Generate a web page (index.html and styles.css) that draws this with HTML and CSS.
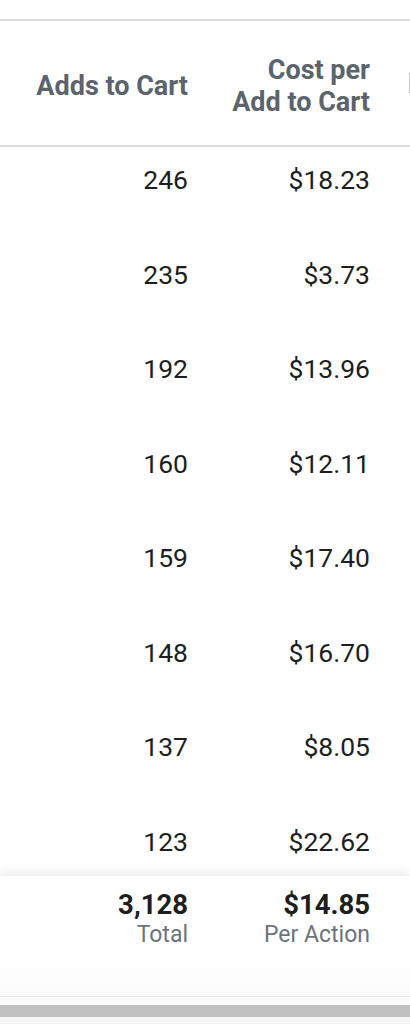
FILE: index.html
```html
<!DOCTYPE html>
<html lang="en">
<head>
<meta charset="utf-8">
<title>Adds to Cart</title>
<link rel="stylesheet" href="styles.css">
</head>
<body>
<div class="page">
  <div class="table">
    <div class="head">
      <div class="hcell">Adds to Cart</div>
      <div class="hcell">Cost per<br>Add to Cart</div>
      <div class="hcell next"><span class="stem"></span></div>
    </div>
    <div class="rows">
      <div class="row"><div class="cell">246</div><div class="cell">$18.23</div><div class="cell"></div></div>
      <div class="row"><div class="cell">235</div><div class="cell">$3.73</div><div class="cell"></div></div>
      <div class="row"><div class="cell">192</div><div class="cell">$13.96</div><div class="cell"></div></div>
      <div class="row"><div class="cell">160</div><div class="cell">$12.11</div><div class="cell"></div></div>
      <div class="row"><div class="cell">159</div><div class="cell">$17.40</div><div class="cell"></div></div>
      <div class="row"><div class="cell">148</div><div class="cell">$16.70</div><div class="cell"></div></div>
      <div class="row"><div class="cell">137</div><div class="cell">$8.05</div><div class="cell"></div></div>
      <div class="row"><div class="cell">123</div><div class="cell">$22.62</div><div class="cell"></div></div>
    </div>
    <div class="foot">
      <div class="fcell"><span class="big">3,128</span><span class="small">Total</span></div>
      <div class="fcell"><span class="big">$14.85</span><span class="small">Per Action</span></div>
      <div class="fcell"></div>
    </div>
  </div>
  <div class="gap"></div>
  <div class="bar"></div>
  <div class="under"></div>
</div>
</body>
</html>
```

FILE: styles.css
```css
html, body {
  margin: 0;
  padding: 0;
  background: #ffffff;
}
body {
  width: 410px;
  height: 1024px;
  overflow: hidden;
  font-family: Roboto, "Liberation Sans", sans-serif;
}
.page {
  padding-top: 19px;
  display: flex;
  flex-direction: column;
}
.table {
  border-top: 2px solid #dddddd;
  display: flex;
  flex-direction: column;
}
.head, .row, .foot {
  display: grid;
  grid-template-columns: 204px 182px 1fr;
}
.head {
  height: 124px;
  border-bottom: 2px solid #dddddd;
  align-items: center;
}
.hcell {
  padding-right: 16px;
  padding-top: 5px;
  text-align: right;
  font-weight: 700;
  font-size: 27px;
  line-height: 32px;
  color: #5b636d;
  white-space: nowrap;
}
.hcell.next {
  padding: 0 0 0 23px;
  display: flex;
  align-items: center;
  height: 20px;
}
.stem {
  width: 2px;
  height: 20px;
  background: #c4c7cb;
}
.rows {
  height: 729px;
  overflow: hidden;
}
.row {
  height: 94.5px;
  box-sizing: border-box;
  padding-top: 17px;
}
.cell {
  padding-right: 16px;
  text-align: right;
  font-size: 26.5px;
  line-height: 32px;
  color: #1c1e21;
}
.foot {
  height: 121px;
  box-sizing: border-box;
  padding-top: 12px;
  background: linear-gradient(#ffffff 65%, #fbfbfb);
  box-shadow: 0 -3px 10px rgba(0, 0, 0, 0.09);
  border-bottom: 1px solid #e8e8e8;
}
.fcell {
  padding-right: 16px;
  display: flex;
  flex-direction: column;
  align-items: flex-end;
}
.big {
  display: block;
  font-weight: 700;
  font-size: 27.5px;
  line-height: 33px;
  color: #1c1e21;
}
.small {
  display: block;
  font-size: 23px;
  line-height: 28px;
  color: #6b737d;
}
.gap {
  height: 8px;
  background: #fafafa;
}
.bar {
  height: 12px;
  background: #c0c0c0;
}
.under {
  height: 20px;
  background: #f5f5f5;
}
```
